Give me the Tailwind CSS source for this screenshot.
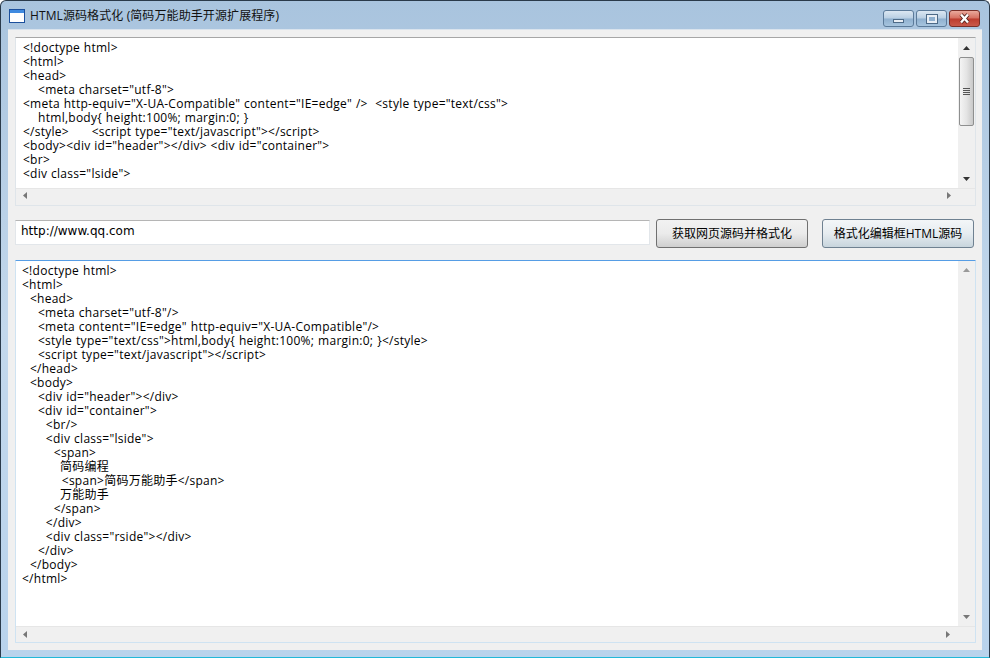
<!DOCTYPE html>
<html lang="zh-CN">
<head>
  <meta charset="UTF-8">
  <title>HTML源码格式化</title>
  <script src="https://cdn.jsdelivr.net/npm/@tailwindcss/browser@4"></script>
</head>
<body class="w-[990px] h-[658px] overflow-hidden bg-white font-['Open_Sans','Noto_Sans_CJK_SC',sans-serif] text-[12px] text-black">
  <div class="w-[990px] h-[658px] flex flex-col border border-[#2a3a4a] border-b-[#22b8d8] rounded-t-[6px] bg-gradient-to-b from-[#a9c4de] via-[#c3d8ec] to-[#b9d3ec] px-[7px] pb-[7px]">
    <!-- title bar -->
    <div class="h-[28px] shrink-0 flex items-center">
      <svg width="16" height="14" viewBox="0 0 16 14" class="ml-[1px] mt-[2px]">
        <rect x="0.5" y="0.5" width="15" height="13" fill="#fff" stroke="#1b4f9c"/>
        <rect x="1" y="1" width="14" height="3" fill="#3f8ae0"/>
      </svg>
      <span class="ml-[5px] mt-[2px] text-[12px] tracking-[0.1px] text-[#111]">HTML源码格式化 (简码万能助手开源扩展程序)</span>
      <div class="ml-auto mr-[2px] flex gap-[2px] mt-[7px]">
        <div class="w-[31px] h-[17px] rounded-[3px] border border-[#5b7a99] bg-[linear-gradient(#dbe7f2,#b9cfe3_48%,#8fb0cf_52%,#a6c4de)] flex items-center justify-center">
          <div class="w-[11px] h-[4px] mt-[5px] bg-[#e8eef5] border border-[#4d6a87]"></div>
        </div>
        <div class="w-[31px] h-[17px] rounded-[3px] border border-[#5b7a99] bg-[linear-gradient(#dbe7f2,#b9cfe3_48%,#8fb0cf_52%,#a6c4de)] flex items-center justify-center">
          <div class="w-[10px] h-[8px] border-2 border-[#e8eef5] outline outline-[#4d6a87] bg-[#8fb0cf]"></div>
        </div>
        <div class="w-[31px] h-[17px] rounded-[3px] border border-[#7a2f28] bg-[linear-gradient(#eaa99c,#d66f60_48%,#bd3c2e_52%,#c9594a)] flex items-center justify-center">
          <svg width="13" height="11" viewBox="0 0 13 11"><path d="M3 1.5 L10 9.5 M10 1.5 L3 9.5" stroke="#4d1d18" stroke-width="4"/><path d="M3 1.5 L10 9.5 M10 1.5 L3 9.5" stroke="#fff" stroke-width="2.4"/></svg>
        </div>
      </div>
    </div>

    <!-- client area -->
    <div class="flex-1 min-h-0 flex flex-col bg-[#f0f0f0] px-[7px] pt-[7px] border-t border-[#d9e3ed]">
      <!-- source editor -->
      <div class="h-[169px] w-[961px] shrink-0 flex flex-col bg-white border border-[#dfe5ea] border-t-[#a6a6a6]">
        <div class="flex-1 min-h-0 flex">
          <pre class="flex-1 min-w-0 overflow-hidden pl-[7px] pt-[3px] font-['Open_Sans','Noto_Sans_CJK_SC',sans-serif] text-[12px] leading-[14px] tracking-[0.26px] [word-spacing:0.4px]">&lt;!doctype html&gt;
&lt;html&gt;
&lt;head&gt;
    &lt;meta charset="utf-8"&gt;
&lt;meta http-equiv="X-UA-Compatible" content="IE=edge" /&gt;  &lt;style type="text/css"&gt;
    html,body{ height:100%; margin:0; }
&lt;/style&gt;      &lt;script type="text/javascript"&gt;&lt;/script&gt;
&lt;body&gt;&lt;div id="header"&gt;&lt;/div&gt; &lt;div id="container"&gt;
&lt;br&gt;
&lt;div class="lside"&gt;</pre>
          <div class="w-[17px] shrink-0 flex flex-col bg-[#f0f0f0]">
            <div class="h-[19px] flex items-center justify-center"><svg width="7" height="4"><path d="M0 4 L3.5 0 L7 4 Z" fill="#333"/></svg></div>
            <div class="h-[69px] mx-[1px] rounded-[2px] border border-[#8e8f8f] bg-gradient-to-r from-[#f4f4f4] via-[#e4e4e4] to-[#c9c9c9] flex flex-col items-center justify-center gap-[1px]">
              <div class="w-[7px] h-[1px] bg-[#555]"></div><div class="w-[7px] h-[1px] bg-[#555]"></div><div class="w-[7px] h-[1px] bg-[#555]"></div><div class="w-[7px] h-[1px] bg-[#555]"></div>
            </div>
            <div class="flex-1 flex items-end justify-center pb-[7px]"><svg width="7" height="4"><path d="M0 0 L7 0 L3.5 4 Z" fill="#333"/></svg></div>
          </div>
        </div>
        <div class="h-[17px] shrink-0 flex items-center justify-between bg-[#f0f0f0] border-t border-[#e6e6e6] pl-[7px] pr-[24px] pb-[3px]">
          <svg width="4" height="7"><path d="M4 0 L0 3.5 L4 7 Z" fill="#777"/></svg>
          <svg width="4" height="7"><path d="M0 0 L4 3.5 L0 7 Z" fill="#777"/></svg>
        </div>
      </div>

      <!-- url row -->
      <div class="h-[54px] shrink-0 flex items-start">
        <div class="w-[635px] h-[25px] mt-[14px] bg-white border border-[#e2e6ea] border-t-[#b5b5b5] pl-[5px] pb-[3px] flex items-center font-['DejaVu_Sans',sans-serif] text-[12px]">http://www.qq.com</div>
        <button class="ml-[6px] mt-[13px] w-[152px] h-[29px] rounded-[3px] border border-[#707070] bg-gradient-to-b from-[#f2f2f2] via-[#ebebeb] to-[#cfcfcf] text-[12px]">获取网页源码并格式化</button>
        <button class="ml-[14px] mt-[13px] w-[152px] h-[29px] rounded-[3px] border border-[#6f8191] bg-gradient-to-b from-[#f3f6f8] via-[#e6ecf0] to-[#c8d5dd] text-[12px]">格式化编辑框HTML源码</button>
      </div>

      <!-- result editor -->
      <div class="h-[383px] w-[961px] shrink-0 flex flex-col bg-white border border-[#cfe3f2] border-t-[#569de5] rounded-[1px]">
        <div class="flex-1 min-h-0 flex">
          <pre class="flex-1 min-w-0 overflow-hidden pl-[6px] pt-[3px] font-['Open_Sans','Noto_Sans_CJK_SC',sans-serif] text-[12px] leading-[14px] tracking-[0.26px] [word-spacing:0.6px]">&lt;!doctype html&gt;
&lt;html&gt;
  &lt;head&gt;
    &lt;meta charset="utf-8"/&gt;
    &lt;meta content="IE=edge" http-equiv="X-UA-Compatible"/&gt;
    &lt;style type="text/css"&gt;html,body{ height:100%; margin:0; }&lt;/style&gt;
    &lt;script type="text/javascript"&gt;&lt;/script&gt;
  &lt;/head&gt;
  &lt;body&gt;
    &lt;div id="header"&gt;&lt;/div&gt;
    &lt;div id="container"&gt;
      &lt;br/&gt;
      &lt;div class="lside"&gt;
        &lt;span&gt;
         &#8201;简码编程
          &lt;span&gt;简码万能助手&lt;/span&gt;
         &#8201;万能助手
        &lt;/span&gt;
      &lt;/div&gt;
      &lt;div class="rside"&gt;&lt;/div&gt;
    &lt;/div&gt;
  &lt;/body&gt;
&lt;/html&gt;</pre>
          <div class="w-[17px] shrink-0 flex flex-col justify-between bg-[#f0f0f0] items-center pt-[7px] pb-[7px]">
            <svg width="7" height="4"><path d="M0 4 L3.5 0 L7 4 Z" fill="#999"/></svg>
            <svg width="7" height="4"><path d="M0 0 L7 0 L3.5 4 Z" fill="#777"/></svg>
          </div>
        </div>
        <div class="h-[16px] shrink-0 flex items-center justify-between bg-[#f0f0f0] border-t border-[#e6e6e6] pl-[7px] pr-[25px]">
          <svg width="4" height="7"><path d="M4 0 L0 3.5 L4 7 Z" fill="#777"/></svg>
          <svg width="4" height="7"><path d="M0 0 L4 3.5 L0 7 Z" fill="#777"/></svg>
        </div>
      </div>
    </div>
  </div>
</body>
</html>
